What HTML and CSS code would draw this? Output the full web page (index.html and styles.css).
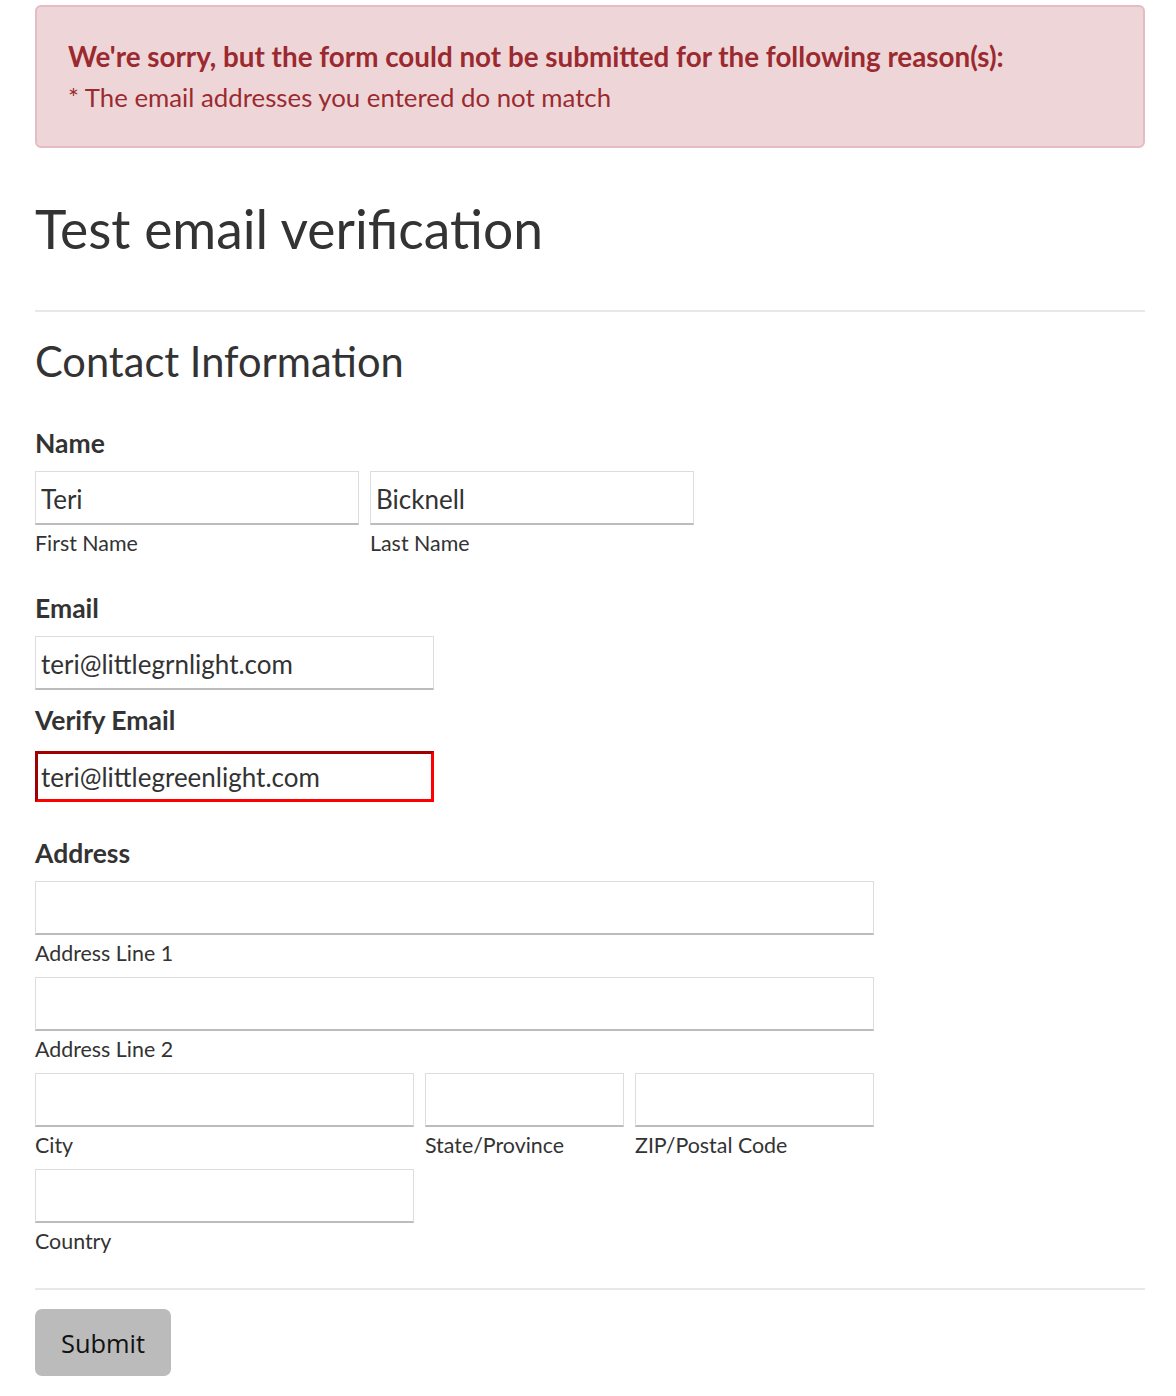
FILE: index.html
```html
<!DOCTYPE html>
<html lang="en">
<head>
<meta charset="utf-8">
<title>Test email verification</title>
<link rel="stylesheet" href="styles.css">
</head>
<body>
<div class="page">
  <div class="alert">
    <div class="alert-title">We're sorry, but the form could not be submitted for the following reason(s):</div>
    <div class="alert-line">* The email addresses you entered do not match</div>
  </div>

  <h1 class="title">Test email verification</h1>
  <hr class="rule rule-top">

  <h2 class="section">Contact Information</h2>

  <div class="group group-name">
    <div class="label">Name</div>
    <div class="row">
      <div class="cell w-name">
        <div class="input">Teri</div>
        <div class="sub">First Name</div>
      </div>
      <div class="cell w-name">
        <div class="input">Bicknell</div>
        <div class="sub">Last Name</div>
      </div>
    </div>
  </div>

  <div class="group group-email">
    <div class="label">Email</div>
    <div class="input w-email">teri@littlegrnlight.com</div>
  </div>

  <div class="group group-verify">
    <div class="label">Verify Email</div>
    <div class="input input-error w-email">teri@littlegreenlight.com</div>
  </div>

  <div class="group group-address">
    <div class="label">Address</div>
    <div class="cell w-full">
      <div class="input"></div>
      <div class="sub">Address Line 1</div>
    </div>
    <div class="cell w-full stack">
      <div class="input"></div>
      <div class="sub">Address Line 2</div>
    </div>
    <div class="row stack">
      <div class="cell w-city">
        <div class="input"></div>
        <div class="sub">City</div>
      </div>
      <div class="cell w-state">
        <div class="input"></div>
        <div class="sub">State/Province</div>
      </div>
      <div class="cell w-zip">
        <div class="input"></div>
        <div class="sub">ZIP/Postal Code</div>
      </div>
    </div>
    <div class="cell w-city stack">
      <div class="input"></div>
      <div class="sub">Country</div>
    </div>
  </div>

  <hr class="rule rule-bottom">

  <button class="submit" type="button">Submit</button>
</div>
</body>
</html>
```
FILE: styles.css
```css
html, body {
  margin: 0;
  padding: 0;
  background: #ffffff;
}

body {
  font-family: "Lato", "Open Sans", sans-serif;
  color: #333333;
}

.page {
  width: 1110px;
  padding: 5px 0 40px 35px;
}

.alert {
  background: #eed6d8;
  border: 2px solid #e6bcc4;
  border-radius: 6px;
  padding: 30px 20px 29px 31px;
  color: #9b2a30;
}

.alert-title {
  font-weight: 700;
  font-size: 27.8px;
  line-height: 40px;
  white-space: nowrap;
}

.alert-line {
  font-weight: 400;
  font-size: 25.8px;
  line-height: 40px;
}

.title {
  margin: 48px 0 0 0;
  font-weight: 400;
  font-size: 53.4px;
  line-height: 64px;
  color: #333333;
}

.rule {
  border: 0;
  height: 2px;
  background: #e8e8e8;
  margin: 0;
}

.rule-top {
  margin-top: 50px;
}

.section {
  margin: 24px 0 0 0;
  font-weight: 400;
  font-size: 41.6px;
  line-height: 50px;
}

.label {
  font-weight: 700;
  font-size: 26.5px;
  line-height: 32px;
  margin-bottom: 12px;
}

.group-name {
  margin-top: 41px;
}

.group-email {
  margin-top: 36px;
}

.group-verify {
  margin-top: 14px;
}

.group-verify .label {
  margin-bottom: 15px;
}

.group-address {
  margin-top: 35px;
}

.row {
  display: flex;
  gap: 11px;
}

.stack {
  margin-top: 11px;
}

.input {
  box-sizing: border-box;
  height: 54px;
  border: 1px solid #dddddd;
  border-bottom: 2px solid #bcbcbc;
  background: #ffffff;
  padding: 3px 5px 0 5px;
  font-size: 26px;
  line-height: 48px;
  color: #333333;
  white-space: nowrap;
  overflow: hidden;
}

.input-error {
  height: 51px;
  border-width: 3px;
  border-style: solid;
  border-color: #a00000 #ff0000 #ff0000 #a00000;
  padding: 2px 3px 0 3px;
  line-height: 43px;
}

.sub {
  margin-top: 5px;
  font-size: 21.4px;
  line-height: 26px;
  color: #333333;
}

.w-name { width: 324px; }
.w-email { width: 399px; }
.w-full { width: 839px; }
.w-city { width: 379px; }
.w-state { width: 199px; }
.w-zip { width: 239px; }

.rule-bottom {
  margin-top: 34px;
}

.submit {
  margin-top: 19px;
  width: 136px;
  height: 67px;
  border: 0;
  border-radius: 7px;
  background: #bbbbbb;
  color: #111111;
  font-family: "Open Sans", "Noto Sans", sans-serif;
  font-size: 25.4px;
  padding: 0;
  cursor: pointer;
}
```
